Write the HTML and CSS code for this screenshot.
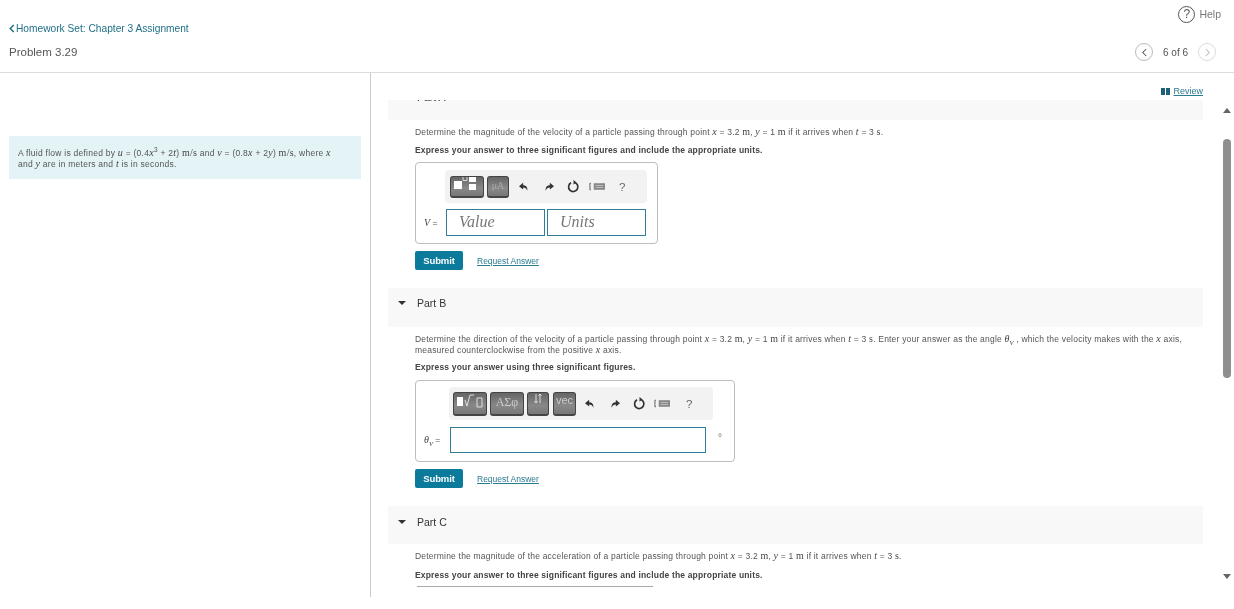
FILE: index.html
```html
<!DOCTYPE html>
<html lang="en">
<head>
<meta charset="utf-8">
<title>Problem 3.29</title>
<link rel="stylesheet" href="styles.css">
</head>
<body>
<header class="top">
  <div class="top-left">
    <a class="back" href="#"><svg class="chev" viewBox="0 0 6 10" width="6" height="9"><path d="M5 1 1 5l4 4" fill="none" stroke="#1c6d85" stroke-width="1.6"/></svg>Homework Set: Chapter 3 Assignment</a>
    <div class="problem">Problem 3.29</div>
  </div>
  <div class="top-right">
    <div class="help"><span class="help-icon">?</span><span>Help</span></div>
    <div class="pager">
      <span class="circle"><svg viewBox="0 0 8 10" width="7" height="9"><path d="M6 1 2 5l4 4" fill="none" stroke="#555" stroke-width="1.2"/></svg></span>
      <span class="count">6 of 6</span>
      <span class="circle off"><svg viewBox="0 0 8 10" width="7" height="9"><path d="M2 1l4 4-4 4" fill="none" stroke="#bbb" stroke-width="1.2"/></svg></span>
    </div>
  </div>
</header>
<main class="main">
  <aside class="side">
    <div class="note">A fluid flow is defined by <span class="m">u</span> = (0.4<span class="m">x</span><sup>3</sup> + 2<span class="m">t</span>) <span class="u">m/s</span> and <span class="m">v</span> = (0.8<span class="m">x</span> + 2<span class="m">y</span>) <span class="u">m/s</span>, where <span class="m">x</span> and <span class="m">y</span> are in meters and <span class="m">t</span> is in seconds.</div>
  </aside>
  <section class="pane">
    <div class="content">
      <div class="review-row"><a class="review" href="#"><svg viewBox="0 0 9 7" width="9" height="7"><path d="M0 0h4v7H0zM5 0h4v7H5z" fill="#1f5f78"/></svg> <span>Review</span></a></div>
      <div class="band band-a"><span class="band-clip">Part A</span></div>
      <div class="part">
        <p class="q">Determine the magnitude of the velocity of a particle passing through point <span class="m">x</span> = 3.2 <span class="u">m</span>, <span class="m">y</span> = 1 <span class="u">m</span> if it arrives when <span class="m">t</span> = 3 <span class="u">s</span>.</p>
        <p class="ex">Express your answer to three significant figures and include the appropriate units.</p>
        <div class="box box-a">
          <div class="bar bar-a">
            <span class="tb tb-t"><svg viewBox="0 0 34 22" width="34" height="22"><path d="M4 5h8v8H4z" fill="#fff"/><path d="M13 1v3.500h4V1" fill="none" stroke="#ddd"/><path d="M19 1h7v5h-7zM19 8h7v6h-7z" fill="#fff"/></svg></span>
            <span class="tb tb-mu">μΑ</span>
            <svg class="ic ic-undo" viewBox="0 0 12 12" width="10" height="10"><path d="M5 1 0 5l5 4V6.500c2.500 0 4 1 5 4 .5-4-1.500-6.500-5-6.500z" fill="#333"/></svg>
            <svg class="ic ic-redo" viewBox="0 0 12 12" width="10" height="10"><path d="M7 1l5 4-5 4V6.500c-2.500 0-4 1-5 4-.5-4 1.500-6.500 5-6.500z" fill="#333"/></svg>
            <svg class="ic ic-reset" viewBox="0 0 14 14" width="13" height="13"><path d="M8 2.600a5 5 0 1 1-3.600.4" fill="none" stroke="#333" stroke-width="1.800"/><path d="M7 0v5l3-2.500z" fill="#333"/></svg>
            <svg class="ic ic-key" viewBox="0 0 17 9" width="16" height="9"><path d="M2 1H1v7h1" stroke="#555" fill="none"/><path d="M5 1h12v7H5z" fill="#888"/><path d="M7 3h8v1H7zM7 5h8v1H7z" fill="#bbb"/></svg>
            <span class="qm qm-a">?</span>
          </div>
          <div class="row">
            <span class="lab lab-v"><span class="m">V</span> =</span>
            <span class="field ph f-val">Value</span>
            <span class="field ph f-uni">Units</span>
          </div>
        </div>
        <div class="act"><span class="btn">Submit</span><a class="req" href="#">Request Answer</a></div>
      </div>
      <div class="band"><span class="tri"></span>Part B</div>
      <div class="part">
        <p class="q">Determine the direction of the velocity of a particle passing through point <span class="m">x</span> = 3.2 <span class="u">m</span>, <span class="m">y</span> = 1 <span class="u">m</span> if it arrives when <span class="m">t</span> = 3 <span class="u">s</span>. Enter your answer as the angle <span class="m">θ<sub>V</sub></span> , which the velocity makes with the <span class="m">x</span> axis, measured counterclockwise from the positive <span class="m">x</span> axis.</p>
        <p class="ex ex-b">Express your answer using three significant figures.</p>
        <div class="box box-b">
          <div class="bar bar-b">
            <span class="tb tb-r"><svg viewBox="0 0 34 24" width="34" height="24"><path d="M4 5h6v9H4z" fill="#fff"/><path d="M12 8l2 6 3-11h4" fill="none" stroke="#ddd"/><path d="M24 6h5v9h-5z" fill="none" stroke="#ddd"/></svg></span>
            <span class="tb tb-g">ΑΣφ</span>
            <span class="tb tb-ar"><svg viewBox="0 0 22 24" width="22" height="24"><path d="M9 2v9M7.500 9l1.500 2 1.500-2M13 11V2M11.500 4 13 2l1.500 2" fill="none" stroke="#ddd"/></svg></span>
            <span class="tb tb-vec">vec</span>
            <svg class="ic ic-undo2" viewBox="0 0 12 12" width="10" height="10"><path d="M5 1 0 5l5 4V6.500c2.500 0 4 1 5 4 .5-4-1.500-6.500-5-6.500z" fill="#333"/></svg>
            <svg class="ic ic-redo" viewBox="0 0 12 12" width="10" height="10"><path d="M7 1l5 4-5 4V6.500c-2.500 0-4 1-5 4-.5-4 1.500-6.500 5-6.500z" fill="#333"/></svg>
            <svg class="ic ic-reset" viewBox="0 0 14 14" width="13" height="13"><path d="M8 2.600a5 5 0 1 1-3.600.4" fill="none" stroke="#333" stroke-width="1.800"/><path d="M7 0v5l3-2.500z" fill="#333"/></svg>
            <svg class="ic ic-key2" viewBox="0 0 17 9" width="16" height="9"><path d="M2 1H1v7h1" stroke="#555" fill="none"/><path d="M5 1h12v7H5z" fill="#888"/><path d="M7 3h8v1H7zM7 5h8v1H7z" fill="#bbb"/></svg>
            <span class="qm qm-b">?</span>
          </div>
          <div class="row row-b">
            <span class="lab lab-t"><span class="m">θ<sub>V</sub></span> =</span>
            <span class="field f-ang"></span>
            <span class="deg">°</span>
          </div>
        </div>
        <div class="act"><span class="btn">Submit</span><a class="req" href="#">Request Answer</a></div>
      </div>
      <div class="band band-c"><span class="tri"></span>Part C</div>
      <div class="part">
        <p class="q">Determine the magnitude of the acceleration of a particle passing through point <span class="m">x</span> = 3.2 <span class="u">m</span>, <span class="m">y</span> = 1 <span class="u">m</span> if it arrives when <span class="m">t</span> = 3 <span class="u">s</span>.</p>
        <p class="ex ex-c">Express your answer to three significant figures and include the appropriate units.</p>
        <div class="box-c"></div>
      </div>
    </div>
    <div class="scroll">
      <span class="sb-up"></span>
      <span class="sb-thumb"></span>
      <span class="sb-down"></span>
    </div>
  </section>
</main>
</body>
</html>
```
FILE: styles.css
```css
* { box-sizing: border-box; }
html, body { margin: 0; height: 609px; overflow: hidden; background: #fff; }
body { font-family: "Liberation Sans", Arial, sans-serif; color: #555; font-size: 8.5px; filter: blur(.4px); }
a { text-decoration: none; }
p { margin: 0; }

.top { height: 73px; border-bottom: 1px solid #dcdcdc; display: flex; justify-content: space-between; }
.top-left { padding: 21px 0 0 9px; }
.back { display: flex; align-items: center; gap: 1px; height: 14px; font-size: 10.2px; color: #1f6f87; }
.problem { margin-top: 10px; height: 14px; line-height: 14px; font-size: 11.5px; color: #555; }
.top-right { padding-top: 5px; display: flex; flex-direction: column; align-items: flex-end; }
.help { display: flex; align-items: center; gap: 4px; height: 18px; margin-right: 13px; font-size: 10.5px; color: #777; }
.help-icon { width: 17px; height: 17px; border: 1.3px solid #555; border-radius: 50%; display: flex; align-items: center; justify-content: center; font-size: 12px; color: #555; }
.pager { margin-top: 20px; margin-right: 18px; display: flex; align-items: center; }
.circle { width: 18px; height: 18px; border: 1px solid #bbb; border-radius: 50%; display: flex; align-items: center; justify-content: center; }
.circle.off { border-color: #ddd; }
.count { width: 45px; text-align: center; font-size: 10px; color: #555; }

.main { display: flex; height: 524px; }
.side { width: 371px; flex: none; border-right: 1px solid #c8ccd0; padding: 63px 9px 0; }
.note { height: 43px; padding: 12px 18px 0 9px; background: #e3f3f6; font-size: 8.5px; line-height: 11px; color: #555; letter-spacing: .25px; }
.m { font-family: "Liberation Serif", serif; font-style: italic; font-size: 10px; line-height: 0; color: #444; }
.u { font-family: "Liberation Serif", serif; font-size: 10px; line-height: 0; color: #444; }
sup, sub { font-size: 6.5px; line-height: 0; }

.pane { flex: 1; display: flex; min-width: 0; }
.content { flex: 1; padding: 0 17px; overflow: hidden; min-width: 0; }
.review-row { height: 27px; display: flex; justify-content: flex-end; align-items: flex-end; padding: 0 0 3px; }
.review { font-size: 9px; color: #2a7a90; display: flex; align-items: center; gap: 3px; line-height: 12px; }
.review span { text-decoration: underline; }

.band { height: 39px; background: #f8f8f8; display: flex; align-items: flex-start; padding: 9px 0 0 10px; font-size: 10.5px; line-height: 12px; color: #333; }
.band-a { height: 20px; overflow: hidden; padding: 0 0 0 29px; }
.band-c { height: 38px; padding-top: 10px; }
.band-clip { margin-top: -9px; }
.tri { width: 0; height: 0; border: 4px solid transparent; border-top: 4px solid #333; border-bottom: 0; margin: 4px 11px 0 0; }
.part { padding-left: 27px; padding-top: 7px; }
.q { color: #555; line-height: 11px; font-size: 8.5px; letter-spacing: .2px; }
.ex { margin-top: 7px; font-weight: 700; font-size: 8.5px; line-height: 11px; color: #444; letter-spacing: .17px; }
.ex-b { margin-top: 6px; }
.ex-c { margin-top: 8px; }

.box { border: 1px solid #bdbdbd; border-radius: 4px; margin-top: 6px; height: 82px; }
.box-a { width: 243px; }
.box-b { width: 320px; margin-top: 7px; }
.bar { height: 33px; background: #f2f2f2; border-radius: 4px; margin-top: 7px; display: flex; align-items: center; }
.bar-a { width: 202px; margin-left: 29px; padding-left: 5px; }
.bar-b { width: 264px; margin: 6px 0 0 33px; padding-left: 4px; }
.tb { height: 24px; display: flex; align-items: flex-start; justify-content: center; border-radius: 3px; border: 1px solid #444; border-bottom-width: 2px; background: linear-gradient(#666, #888 60%, #777); color: #ccc; overflow: hidden; font-family: "Liberation Serif", serif; flex: none; margin-right: 3px; }
.tb svg { flex: none; margin: -1px; }
.bar-a .tb { height: 22px; }
.tb-t { width: 34px; }
.tb-mu { width: 22px; font-size: 10px; padding-top: 3px; color: #aaa; }
.tb-r { width: 34px; }
.tb-g { width: 34px; font-size: 12px; padding-top: 2px; }
.tb-ar { width: 22px; margin-right: 4px; }
.tb-vec { width: 23px; font: 11px "Liberation Sans", sans-serif; padding-top: 1px; }
.ic { flex: none; }
.ic-undo { margin-left: 7px; }
.ic-undo2 { margin-left: 6px; }
.ic-redo { margin-left: 15px; }
.ic-reset { margin-left: 13px; }
.ic-key { margin-left: 9px; }
.ic-key2 { margin-left: 8px; }
.qm { font-size: 11.5px; color: #666; }
.qm-a { margin-left: 14px; }
.qm-b { margin-left: 16px; }

.row { display: flex; align-items: center; margin-top: 6px; padding-left: 8px; }
.lab { font-size: 8.5px; color: #555; }
.lab-v { width: 22px; }
.field { border: 1px solid #2f8096; height: 27px; background: #fff; display: flex; align-items: center; }
.ph { font: italic 16px "Liberation Serif", serif; color: #777; padding: 0 0 2px 12px; }
.f-val { width: 99px; margin-right: 2px; }
.f-uni { width: 99px; }
.row-b { margin-top: 7px; }
.lab-t { width: 26px; }
.f-ang { width: 256px; height: 26px; }
.deg { margin-left: 12px; color: #777; margin-top: -6px; font-size: 10px; }

.act { display: flex; align-items: center; margin-top: 7px; height: 19px; }
.btn { width: 48px; height: 19px; background: #0b7a9b; color: #fff; border-radius: 2px; font-size: 9.5px; font-weight: 700; display: flex; align-items: center; justify-content: center; letter-spacing: -.1px; }
.req { margin-left: 14px; font-size: 8.5px; color: #2a7a90; text-decoration: underline; }
.part + .band { margin-top: 18px; }
.box-c { margin: 5px 0 0 2px; width: 236px; height: 2px; border-top: 1px solid #aaa; }

.scroll { width: 14px; flex: none; display: flex; flex-direction: column; align-items: center; padding-top: 35px; }
.sb-up { width: 0; height: 0; border: 4px solid transparent; border-bottom: 5px solid #666; border-top: 0; }
.sb-thumb { width: 8px; height: 239px; background: #8f8f8f; border-radius: 4px; margin-top: 26px; }
.sb-down { width: 0; height: 0; border: 4px solid transparent; border-top: 5px solid #666; border-bottom: 0; margin-top: 196px; }
```
